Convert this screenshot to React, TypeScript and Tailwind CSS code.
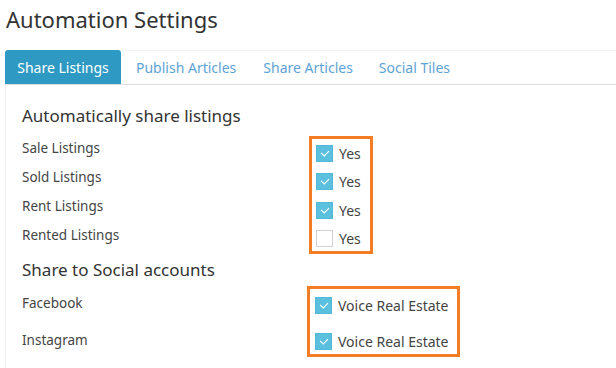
import React from "react";

const Check = ({ on }: { on: boolean }) =>
  on ? (
    <span className="flex h-[17px] w-[17px] shrink-0 items-center justify-center bg-[#5bc0de] border border-[#52b7d9]">
      <svg width="10" height="7" viewBox="0 0 10 7" fill="none">
        <path d="M1 2.8 L4.3 6 L9 1.2" stroke="white" strokeWidth="1.1" />
      </svg>
    </span>
  ) : (
    <span className="block h-[17px] w-[17px] shrink-0 bg-white border border-[#d2d2d2]" />
  );

export default function App() {
  const listings = [
    ["Sale Listings", true],
    ["Sold Listings", true],
    ["Rent Listings", true],
    ["Rented Listings", false],
  ] as const;
  return (
    <div
      className="w-[616px] h-[368px] overflow-hidden bg-white text-[#444]"
      style={{ fontFamily: '"Noto Sans", "Open Sans", sans-serif' }}
    >
      <div className="pl-[6px] pt-[4px] h-[50px] text-[22px] leading-[30px] text-[#333]">
        Automation Settings
      </div>
      <div className="ml-[5px] flex h-[35px] border-b border-[#dddddd]">
        <div className="flex w-[116px] items-center justify-center rounded-t-[3px] bg-[#2e9ac3] text-[14px] text-white">
          Share Listings
        </div>
        <div className="flex flex-1 items-center border-t border-[#f2f2f2] text-[14px] text-[#5ea3d6]">
          <span className="ml-[15px]">Publish Articles</span>
          <span className="ml-[27px]">Share Articles</span>
          <span className="ml-[26px]">Social Tiles</span>
        </div>
      </div>
      <div className="ml-[5px] border-l border-[#eeeeee] pl-[16px] h-[300px]">
        <div className="pt-[20px] text-[17px] leading-[22px] text-[#333]">Automatically share listings</div>
        <div className="flex">
          <div className="w-[287px] pt-[13px] text-[13.5px]">
            {listings.map(([l]) => (
              <div key={l} className="h-[29px] leading-[16px]">
                {l}
              </div>
            ))}
          </div>
          <div className="mt-[9px] h-[118px] w-[64px] border-[3px] border-[#f47c24] pl-[4px]">
            {listings.map(([l, on]) => (
              <div key={l} className="flex h-[28.5px] items-center gap-[6px] text-[14px]">
                <Check on={on} />
                <span>Yes</span>
              </div>
            ))}
          </div>
        </div>
        <div className="pt-[3px] text-[17px] leading-[22px] text-[#333]">Share to Social accounts</div>
        <div className="flex">
          <div className="w-[285px] pt-[14px] text-[13.5px]">
            <div className="h-[37px] leading-[16px]">Facebook</div>
            <div className="h-[37px] leading-[16px]">Instagram</div>
          </div>
          <div className="mt-[5px] h-[71px] w-[153px] border-[3px] border-[#f47c24] pl-[5px] pt-[1px]">
            <div className="flex flex-col gap-[6px]">
              {["a", "b"].map((k) => (
                <div key={k} className="flex h-[30px] items-center gap-[6px] text-[14px]">
                  <Check on={true} />
                  <span>Voice Real Estate</span>
                </div>
              ))}
            </div>
          </div>
        </div>
      </div>
    </div>
  );
}
